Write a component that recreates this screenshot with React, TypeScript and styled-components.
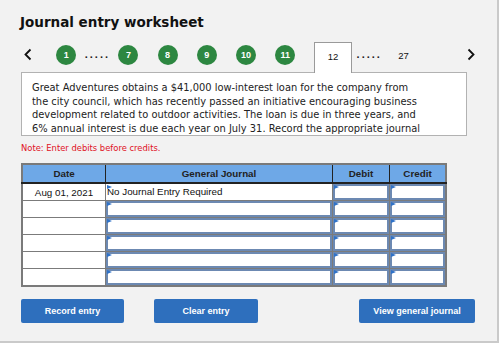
import React from "react";
import styled, { createGlobalStyle } from "styled-components";

const GlobalStyle = createGlobalStyle`
  body {
    margin: 0;
    background: #ffffff;
  }
`;

const Panel = styled.div`
  box-sizing: border-box;
  width: 499px;
  height: 343px;
  background: #f2f2f2;
  border-right: 2px solid #cacaca;
  border-bottom: 2px solid #cacaca;
  padding: 13px 0 0 21px;
  display: flex;
  flex-direction: column;
  font-family: "DejaVu Sans", Verdana, sans-serif;
`;

const Title = styled.h1`
  margin: 0 0 0 -1px;
  font-size: 13.5px;
  line-height: 18px;
  font-weight: bold;
  color: #111;
`;

const Nav = styled.div`
  display: flex;
  align-items: flex-start;
  height: 30px;
  margin-top: 11px;
  width: 454px;
  font-family: "Liberation Sans", Arial, sans-serif;
`;

const Arrow = styled.div<{ $w: number; $right?: boolean }>`
  width: ${(p) => p.$w}px;
  height: 30px;
  display: flex;
  justify-content: ${(p) => (p.$right ? "flex-end" : "flex-start")};
  padding-top: 6px;
  box-sizing: border-box;
  padding-left: ${(p) => (p.$right ? 0 : 3)}px;
`;

const Step = styled.div<{ $gap: number }>`
  width: 20px;
  height: 20px;
  margin-top: 3px;
  margin-left: ${(p) => p.$gap}px;
  border-radius: 50%;
  background: #2d8741;
  color: #fff;
  font-size: 9px;
  font-weight: bold;
  display: flex;
  align-items: center;
  justify-content: center;
  flex-shrink: 0;
`;

const Dots = styled.div<{ $w: number }>`
  width: ${(p) => p.$w}px;
  text-align: center;
  font-size: 11px;
  font-weight: bold;
  letter-spacing: 2px;
  color: #222;
  padding-top: 6px;
`;

const Tab = styled.div`
  box-sizing: border-box;
  width: 38px;
  height: 31px;
  margin-left: 19.2px;
  margin-bottom: -1px;
  background: #fff;
  border: 1px solid #9a9a9a;
  border-bottom: none;
  position: relative;
  z-index: 1;
  text-align: center;
  font-size: 9.5px;
  color: #111;
  padding-top: 8px;
`;

const PageLink = styled.div`
  width: 34px;
  text-align: center;
  font-size: 9.5px;
  color: #111;
  padding-top: 8px;
`;

const Question = styled.div`
  box-sizing: border-box;
  width: 446px;
  height: 64px;
  background: #fff;
  border: 1px solid #b2b2b2;
  padding: 8px 44px 0 10px;
  overflow: hidden;
  font-size: 9.9px;
  line-height: 13.6px;
  color: #222;
`;

const Note = styled.div`
  margin-top: 6px;
  font-size: 8.4px;
  line-height: 12px;
  color: #e0101e;
`;

const Sheet = styled.table`
  margin-top: 9px;
  border-collapse: collapse;
  table-layout: fixed;
  width: 419px;
  font-family: "Liberation Sans", Arial, sans-serif;
  font-size: 9.8px;
  color: #111;
  border: 2px solid #7a7a7a;
`;

const Head = styled.th<{ $w: number }>`
  width: ${(p) => p.$w}px;
  height: 17px;
  padding: 0;
  background: #6ea8e7;
  font-weight: bold;
  color: #222;
  border-left: 1px solid #222;
  border-bottom: 2px solid #222;
  &:first-child {
    border-left: none;
  }
`;

const Cell = styled.td<{ $center?: boolean }>`
  padding: 0;
  height: 16px;
  border: 1px solid #7b7b7b;
  text-align: ${(p) => (p.$center ? "center" : "left")};
  position: relative;
  background: #fff;
`;

const Entry = styled.div<{ $plain?: boolean }>`
  box-sizing: border-box;
  height: 16px;
  border: ${(p) => (p.$plain ? "0" : "2px solid #6c89b2")};
  padding-left: ${(p) => (p.$plain ? 1 : 2)}px;
  line-height: ${(p) => (p.$plain ? 15 : 12)}px;
  white-space: nowrap;
  overflow: hidden;
`;

const Flag = styled.span`
  position: absolute;
  left: 1px;
  top: 1px;
  width: 0;
  height: 0;
  border-top: 2.5px solid transparent;
  border-bottom: 2.5px solid transparent;
  border-left: 5px solid #2f72c8;
`;

const Actions = styled.div`
  display: flex;
  width: 454px;
  margin-top: 12px;
`;

const Button = styled.button<{ $w: number; $push?: boolean }>`
  width: ${(p) => p.$w}px;
  height: 24px;
  margin-left: ${(p) => (p.$push ? "auto" : "0")};
  margin-right: ${(p) => (p.$push ? 0 : 30)}px;
  background: #2e6fbd;
  color: #fff;
  border: none;
  border-radius: 2px;
  font-family: "Liberation Sans", Arial, sans-serif;
  font-size: 9px;
  font-weight: bold;
  padding: 0;
`;

const Chevron = ({ right }: { right?: boolean }) => (
  <svg width="8" height="13" viewBox="0 0 8 13">
    <path
      d={right ? "M1.5 1.5 L6.5 6.5 L1.5 11.5" : "M6.5 1.5 L1.5 6.5 L6.5 11.5"}
      fill="none"
      stroke="#111"
      strokeWidth="1.8"
    />
  </svg>
);

const rows = [0, 1, 2, 3, 4, 5];

export default function App() {
  return (
    <>
      <GlobalStyle />
      <Panel>
        <Title>Journal entry worksheet</Title>
        <Nav>
          <Arrow $w={36}>
            <Chevron />
          </Arrow>
          <Step $gap={0}>1</Step>
          <Dots $w={43}>.....</Dots>
          <Step $gap={0}>7</Step>
          <Step $gap={19.2}>8</Step>
          <Step $gap={19.2}>9</Step>
          <Step $gap={19.2}>10</Step>
          <Step $gap={19.2}>11</Step>
          <Tab>12</Tab>
          <Dots $w={36}>.....</Dots>
          <PageLink>27</PageLink>
          <Arrow $w={56} $right>
            <Chevron right />
          </Arrow>
        </Nav>
        <Question>
          Great Adventures obtains a $41,000 low-interest loan for the company from
          the city council, which has recently passed an initiative encouraging business
          development related to outdoor activities. The loan is due in three years, and
          6% annual interest is due each year on July 31. Record the appropriate journal
        </Question>
        <Note>Note: Enter debits before credits.</Note>
        <Sheet>
          <thead>
            <tr>
              <Head $w={82}>Date</Head>
              <Head $w={226}>General Journal</Head>
              <Head $w={56}>Debit</Head>
              <Head $w={55}>Credit</Head>
            </tr>
          </thead>
          <tbody>
            {rows.map((i) => (
              <tr key={i}>
                <Cell $center>{i === 0 ? "Aug 01, 2021" : ""}</Cell>
                <Cell>
                  <Flag />
                  <Entry $plain={i === 0}>{i === 0 ? "No Journal Entry Required" : ""}</Entry>
                </Cell>
                <Cell>
                  <Flag />
                  <Entry />
                </Cell>
                <Cell>
                  <Flag />
                  <Entry />
                </Cell>
              </tr>
            ))}
          </tbody>
        </Sheet>
        <Actions>
          <Button $w={103}>Record entry</Button>
          <Button $w={104}>Clear entry</Button>
          <Button $w={116} $push>
            View general journal
          </Button>
        </Actions>
      </Panel>
    </>
  );
}
